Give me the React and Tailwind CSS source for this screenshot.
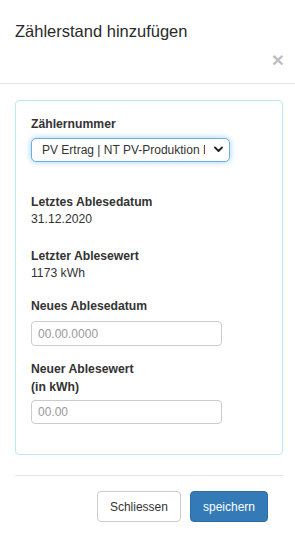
import React, { useState } from 'react';

const App = () => {
  const [meter, setMeter] = useState('pv-nt');

  return (
    <div className="w-[295px] h-[551px] bg-white text-[#333] font-['Liberation_Sans',Arial,sans-serif]">
      {/* Kopfbereich */}
      <div className="pt-[18px] pb-[13px] pl-[15px] pr-[11px] border-b border-[#e5e5e5]">
        <h4 className="text-[16.5px] leading-[26px] font-normal text-[#2a2a2a]">Zählerstand hinzufügen</h4>
        <div className="mt-[5px] flex justify-end">
          <button className="text-[21px] leading-none font-bold text-black opacity-25">×</button>
        </div>
      </div>

      {/* Inhalt */}
      <div className="pl-[15px] pr-[12px] pt-[16px]">
        <div className="border border-[#bce8f1] rounded-[4px] px-[15px] pt-[15px] pb-[30px] text-[12.2px]">
          <div className="font-bold leading-[17px]">Zählernummer</div>
          <div className="relative mt-[5px] w-[199px]">
            <select
              value={meter}
              onChange={(e) => setMeter(e.target.value)}
              className="appearance-none w-full h-[24px] pl-[10px] pr-[24px] text-[12px] text-[#333] bg-white border border-[#66afe9] rounded-[5px] shadow-[0_0_6px_rgba(102,175,233,0.6)] outline-none"
            >
              <option value="pv-nt">PV Ertrag | NT PV-Produktion Dach</option>
              <option value="pv-ht">PV Ertrag | HT PV-Produktion Dach</option>
            </select>
            <svg className="absolute right-[7px] top-[8px] pointer-events-none" width="9" height="7" viewBox="0 0 9 7">
              <polyline points="1,1.5 4.5,5 8,1.5" fill="none" stroke="#222" strokeWidth="1.8" strokeLinecap="round" strokeLinejoin="round" />
            </svg>
          </div>

          <div className="mt-[32px] leading-[17px]">
            <div className="font-bold">Letztes Ablesedatum</div>
            <div>31.12.2020</div>
          </div>

          <div className="mt-[20px] leading-[17px]">
            <div className="font-bold">Letzter Ablesewert</div>
            <div>1173 kWh</div>
          </div>

          <div className="mt-[16px] font-bold leading-[17px]">Neues Ablesedatum</div>
          <input
            type="text"
            placeholder="00.00.0000"
            className="mt-[6px] block w-[191px] h-[25px] px-[6px] text-[12px] border border-[#ccc] rounded-[4px] placeholder:text-[#999] outline-none"
          />

          <div className="mt-[14px] font-bold leading-[18px]">
            Neuer Ablesewert
            <br />
            (in kWh)
          </div>
          <input
            type="text"
            placeholder="00.00"
            className="mt-[4px] block w-[191px] h-[24px] px-[6px] text-[12px] border border-[#ccc] rounded-[4px] placeholder:text-[#999] outline-none"
          />
        </div>

        {/* Fußbereich */}
        <div className="mt-[20px] border-t border-[#e5e5e5] p-[15px] flex justify-end gap-[9px]">
          <button className="h-[31px] px-[12px] text-[12px] text-[#333] bg-white border border-[#ccc] rounded-[4px]">
            Schliessen
          </button>
          <button className="h-[31px] px-[12px] text-[12px] text-white bg-[#337ab7] border border-[#2e6da4] rounded-[4px]">
            speichern
          </button>
        </div>
      </div>
    </div>
  );
};

export default App;
